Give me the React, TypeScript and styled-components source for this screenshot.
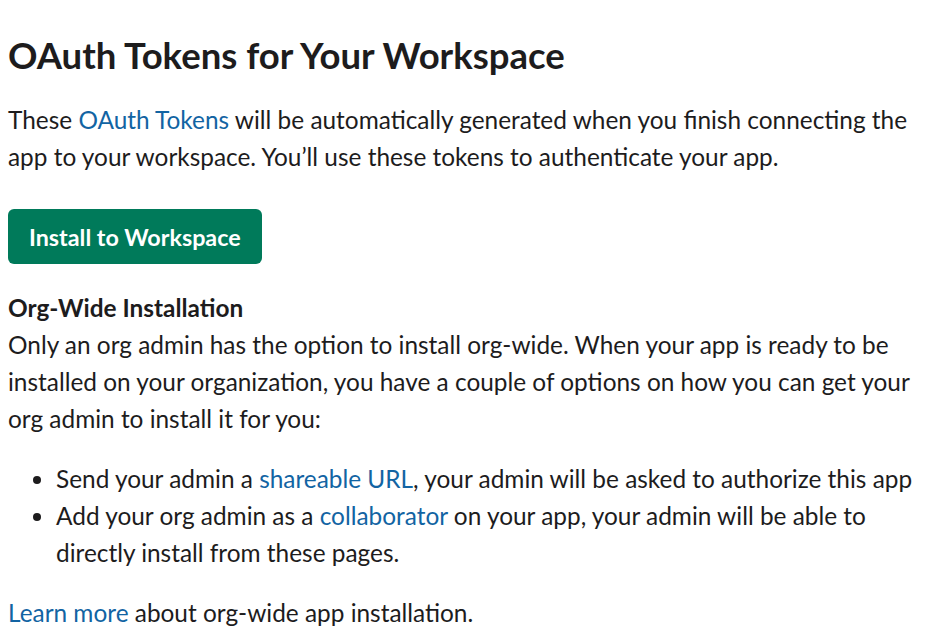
import React from "react";
import styled, { createGlobalStyle } from "styled-components";

const GlobalStyle = createGlobalStyle`
  body {
    margin: 0;
    background: #ffffff;
    font-family: Lato, "Noto Sans", sans-serif;
    color: #1d1c1d;
  }
`;

const Page = styled.div`
  padding: 31px 8px 0 8px;
  width: 924px;
`;

const Title = styled.h1`
  margin: 0 0 22px 0;
  font-size: 36.5px;
  line-height: 48px;
  font-weight: 700;
  color: #1d1c1d;
`;

const Text = styled.p<{ gap?: number }>`
  margin: 0 0 ${(p) => p.gap ?? 0}px 0;
  font-size: 24.4px;
  line-height: 37px;
  color: #1d1c1d;
`;

const Link = styled.a`
  color: #1264a3;
  text-decoration: none;
`;

const InstallButton = styled.button`
  display: block;
  height: 55px;
  padding: 0 21px;
  margin: 0 0 25px 0;
  background: #007a5a;
  color: #ffffff;
  border: none;
  border-radius: 6px;
  font-family: Lato, "Noto Sans", sans-serif;
  font-size: 23.3px;
  font-weight: 700;
  cursor: pointer;
`;

const SubHeading = styled.h3`
  margin: 0;
  font-size: 24.4px;
  line-height: 37px;
  font-weight: 700;
`;

const List = styled.ul`
  margin: 0 0 23px 0;
  padding-left: 48px;
  font-size: 24.4px;
  line-height: 37px;
`;

export default function App() {
  return (
    <>
      <GlobalStyle />
      <Page>
        <Title>OAuth Tokens for Your Workspace</Title>
        <Text gap={34}>
          These <Link href="#">OAuth Tokens</Link> will be automatically generated when you finish connecting the
          app to your workspace. You’ll use these tokens to authenticate your app.
        </Text>
        <InstallButton>Install to Workspace</InstallButton>
        <SubHeading>Org-Wide Installation</SubHeading>
        <Text gap={23}>
          Only an org admin has the option to install org-wide. When your app is ready to be installed on your
          organization, you have a couple of options on how you can get your org admin to install it for you:
        </Text>
        <List>
          <li>
            Send your admin a <Link href="#">shareable URL</Link>, your admin will be asked to authorize this app
          </li>
          <li>
            Add your org admin as a <Link href="#">collaborator</Link> on your app, your admin will be able to
            directly install from these pages.
          </li>
        </List>
        <Text>
          <Link href="#">Learn more</Link> about org-wide app installation.
        </Text>
      </Page>
    </>
  );
}
